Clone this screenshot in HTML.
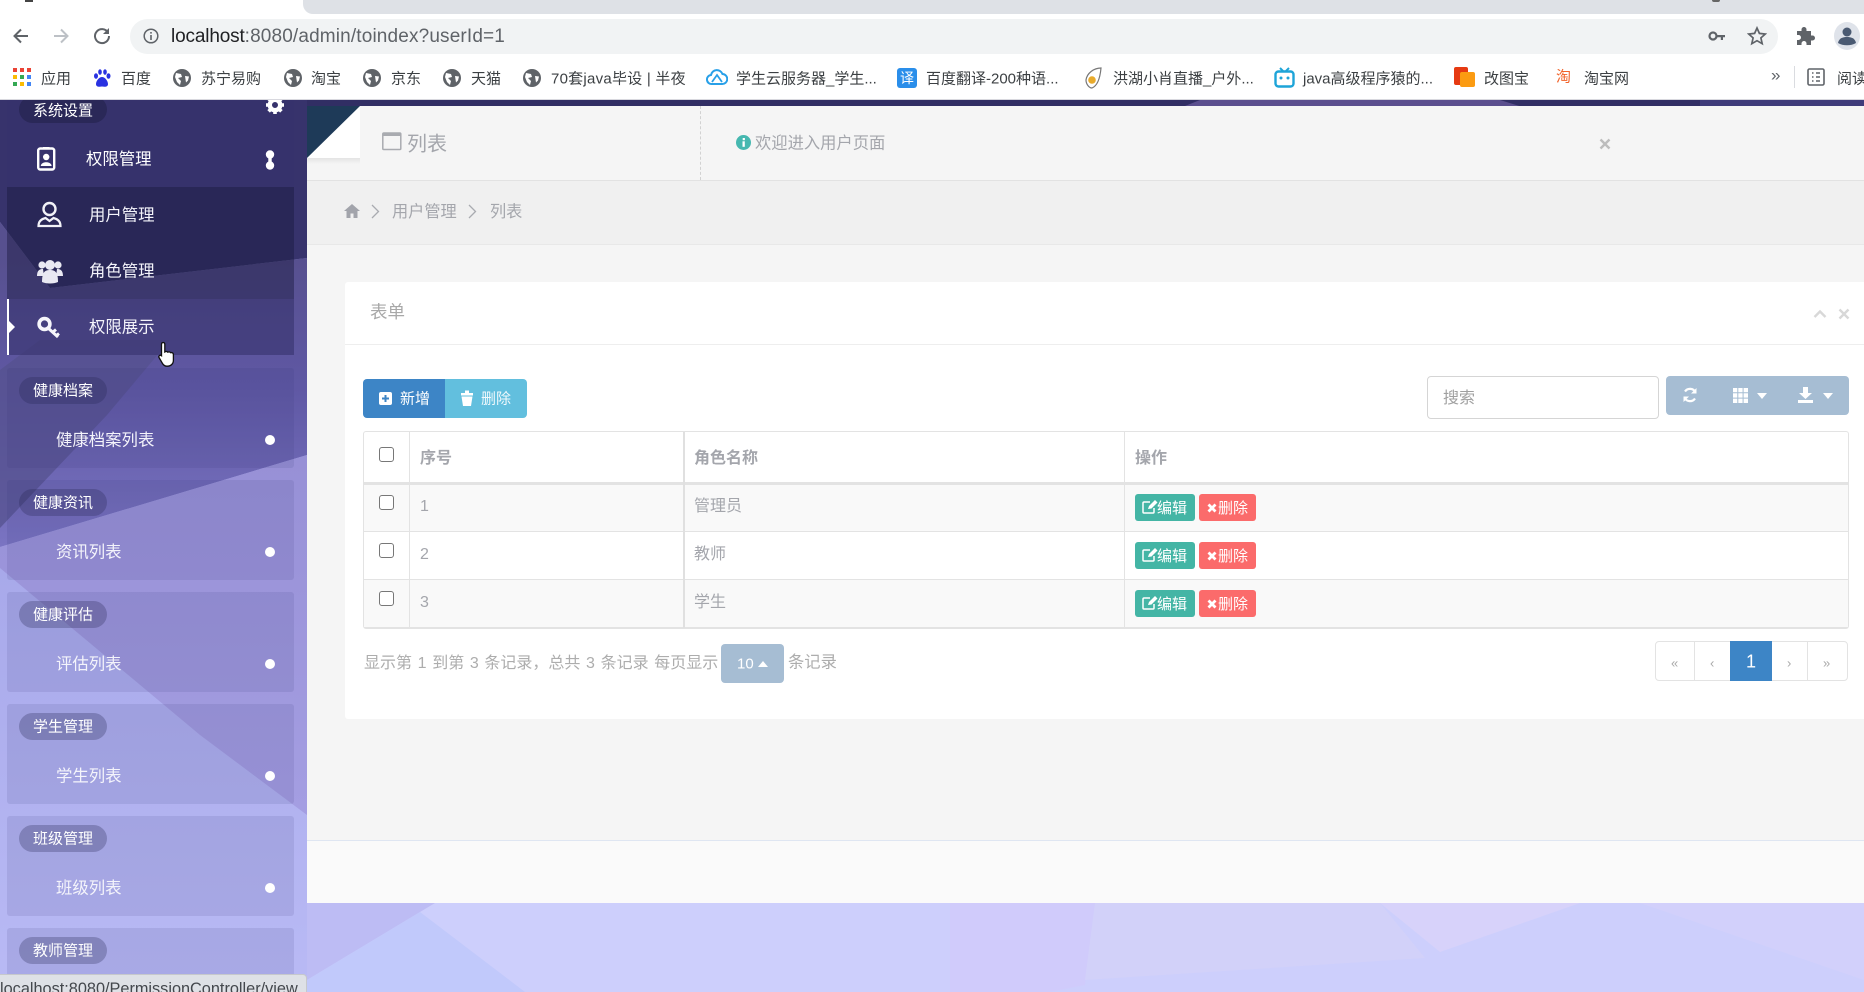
<!DOCTYPE html>
<html lang="zh"><head><meta charset="utf-8"><title>列表</title>
<style>
html,body{margin:0;padding:0;width:1864px;height:992px;overflow:hidden;background:#cdcffc}
body{font-family:"Liberation Sans","Noto Sans CJK SC",sans-serif;position:relative}
.a{position:absolute;box-sizing:border-box}
.t{position:absolute;white-space:nowrap;transform:translateY(calc(-50% + 1.5px));line-height:1.2}
.bm{font-size:15px;color:#3c4043;top:78px}
svg{position:absolute;display:block}
.panel{position:absolute;left:7px;width:287px;height:100px;background:rgba(50,50,110,.11);border-radius:3px}
.pill{position:absolute;left:19px;width:88px;height:27px;border-radius:14px;background:rgba(35,35,80,.28)}
.pt{color:#fff;font-size:15px;left:33px}
.it{color:#f4f4fb;font-size:16.4px}
.dot{position:absolute;left:265px;width:10px;height:10px;border-radius:50%;background:#fff}
.g{color:#a4a6ac}
.ck{position:absolute;left:379px;width:15px;height:15px;box-sizing:border-box;border:1.5px solid #777;border-radius:3px;background:#fff}
.btn{position:absolute;box-sizing:border-box;height:27px;border-radius:3px;color:#fff;font-size:15px;line-height:29px;white-space:nowrap}
.e{left:1135px;width:60px;background:#44b5a5;padding-left:22px}
.d{left:1199px;width:57px;background:#fb6b6b;padding-left:19px}
.pg{font-size:13px;color:#a8a8a8;top:662px}
</style></head><body>

<!-- page background -->
<svg style="left:0;top:100px" width="1864" height="892" viewBox="0 100 1864 892">
<defs>
<linearGradient id="m" x1="0" y1="258" x2="0" y2="547" gradientUnits="userSpaceOnUse"><stop offset="0" stop-color="#57508f"/><stop offset=".45" stop-color="#5f58a4"/><stop offset="1" stop-color="#7a74c2"/></linearGradient>
<linearGradient id="l" x1="0" y1="455" x2="0" y2="815" gradientUnits="userSpaceOnUse"><stop offset="0" stop-color="#9790d6"/><stop offset="1" stop-color="#a49ee2"/></linearGradient>
<linearGradient id="b" x1="0" y1="568" x2="0" y2="992" gradientUnits="userSpaceOnUse"><stop offset="0" stop-color="#a8a9ea"/><stop offset="1" stop-color="#b9baf5"/></linearGradient>
</defs>
<rect x="0" y="100" width="1864" height="892" fill="#cdcffc"/>
<rect x="0" y="100" width="1864" height="8" fill="#312e64"/>
<polygon points="1180,108 1200,100 1500,100 1526,108" fill="#5b4f8e"/>
<rect x="1700" y="100" width="164" height="8" fill="#3f3c7a"/>
<!-- lower lavender facets -->
<polygon points="307,903 435,903 420,912 307,980" fill="#bdbcf4"/>
<polygon points="307,980 420,912 525,992 307,992" fill="#c1c9fb"/>
<polygon points="950,903 1095,903 1085,985 1050,992 950,992" fill="#d0cbfb"/>
<polygon points="1095,903 1380,903 1425,958 1085,980" fill="#d2d1f9"/>
<polygon points="1380,903 1580,903 1440,952" fill="#d7d2fa"/>
<polygon points="1640,903 1864,903 1864,980" fill="#d2d0fb"/>
<!-- sidebar facets -->
<rect x="0" y="100" width="307" height="892" fill="url(#b)"/>
<polygon points="0,222 50,288 307,258 307,455 0,547" fill="url(#m)"/>
<polygon points="0,100 307,100 307,258 50,288 0,222" fill="#37336c"/>
<polygon points="0,528 107,415 170,340 40,340 0,370" fill="#56518f" opacity=".75"/>
<polygon points="0,547 307,455 307,815 200,735 0,568" fill="url(#l)"/>
</svg>

<!-- sidebar panels -->
<div class="a" style="left:7px;top:100px;width:287px;height:255px;background:rgba(50,50,110,.1)"></div>
<div class="a" style="left:7px;top:187px;width:287px;height:168px;background:rgba(20,20,50,.36)"></div>
<div class="a" style="left:7px;top:299px;width:287px;height:56px;background:rgba(90,85,170,.24)"></div>
<div class="a" style="left:7px;top:299px;width:2px;height:56px;background:#fff"></div>
<div class="a" style="left:9px;top:321px;width:6px;height:12px;background:#fff;clip-path:polygon(0 0,100% 50%,0 100%)"></div>
<div class="pill" style="top:96px;background:rgba(25,25,60,.4)"></div>
<div class="t pt" style="top:110px">系统设置</div>
<svg style="left:265px;top:95px" width="20" height="20" viewBox="0 0 20 20"><circle cx="10" cy="10" r="5.2" fill="none" stroke="#fff" stroke-width="4.4"/><g stroke="#fff" stroke-width="3.6"><path d="M10 1v4M10 15v4M1 10h4M15 10h4M3.6 3.6l2.8 2.8M13.6 13.6l2.8 2.8M3.6 16.4l2.8-2.8M13.6 6.4l2.8-2.8"/></g></svg>
<svg style="left:37px;top:147px" width="19" height="24" viewBox="0 0 19 24"><rect x="1.2" y="1.5" width="16" height="21" rx="2" fill="none" stroke="#fff" stroke-width="2.4"/><circle cx="9.2" cy="10" r="3.2" fill="#fff"/><path d="M3.800 19c0-5 10.800-5 10.800 0z" fill="#fff"/><rect x="6" y="0" width="6.500" height="2.500" fill="#fff"/></svg>
<div class="t it" style="left:86px;top:159px;color:#fff">权限管理</div>
<svg style="left:264px;top:150px" width="12" height="20" viewBox="0 0 12 20"><circle cx="6" cy="4.5" r="4.2" fill="#fff"/><circle cx="6" cy="15.5" r="4.2" fill="#fff"/><rect x="4.3" y="4" width="3.4" height="12" fill="#fff"/></svg>
<svg style="left:37px;top:201px" width="25" height="27" viewBox="0 0 25 27"><circle cx="12.5" cy="8" r="6" fill="none" stroke="#f2f2f8" stroke-width="2.4"/><path d="M1.5 25c0-5 3-7 7-8l4 3 4-3c4 1 7 3 7 8z" fill="none" stroke="#f2f2f8" stroke-width="2.2"/></svg>
<div class="t it" style="left:89px;top:215px">用户管理</div>
<svg style="left:37px;top:258px" width="26" height="26" viewBox="0 0 26 26" fill="#e9e9f2"><circle cx="5" cy="7" r="3.6"/><circle cx="21" cy="7" r="3.6"/><circle cx="13" cy="7" r="5"/><path d="M0 18c0-6 3-7 6-7l1 7zM26 18c0-6-3-7-6-7l-1 7z"/><path d="M5 24c0-10 3-12 8-12s8 2 8 12c-4 2-12 2-16 0z"/></svg>
<div class="t it" style="left:89px;top:271px">角色管理</div>
<svg style="left:37px;top:316px" width="24" height="24" viewBox="0 0 24 24"><circle cx="7.5" cy="8" r="5.4" fill="none" stroke="#f6f6fb" stroke-width="3.6"/><path d="M11 12l10 9M16 16l3-2.5M19.5 19.5l2.5-2" fill="none" stroke="#f6f6fb" stroke-width="3"/></svg>
<div class="t it" style="left:89px;top:327px">权限展示</div>

<div class="panel" style="top:368px"></div><div class="pill" style="top:377px"></div>
<div class="t pt" style="top:390px">健康档案</div><div class="t it" style="left:56px;top:440px">健康档案列表</div><div class="dot" style="top:435px"></div>
<div class="panel" style="top:480px"></div><div class="pill" style="top:489px"></div>
<div class="t pt" style="top:502px">健康资讯</div><div class="t it" style="left:56px;top:552px">资讯列表</div><div class="dot" style="top:547px"></div>
<div class="panel" style="top:592px"></div><div class="pill" style="top:601px"></div>
<div class="t pt" style="top:614px">健康评估</div><div class="t it" style="left:56px;top:664px">评估列表</div><div class="dot" style="top:659px"></div>
<div class="panel" style="top:704px"></div><div class="pill" style="top:713px"></div>
<div class="t pt" style="top:726px">学生管理</div><div class="t it" style="left:56px;top:776px">学生列表</div><div class="dot" style="top:771px"></div>
<div class="panel" style="top:816px"></div><div class="pill" style="top:825px"></div>
<div class="t pt" style="top:838px">班级管理</div><div class="t it" style="left:56px;top:888px">班级列表</div><div class="dot" style="top:883px"></div>
<div class="panel" style="top:928px"></div><div class="pill" style="top:937px"></div>
<div class="t pt" style="top:950px">教师管理</div>

<!-- cursor -->
<svg style="left:157px;top:341px" width="20" height="27" viewBox="0 0 20 27"><path d="M6 1.5c1.2 0 1.8.8 1.8 2V11c1-.6 2.4-.6 3 .2 1-.5 2.2-.3 2.8.5 1-.4 2.8 0 2.8 2v5.5c0 3.500-2.500 6-6 6H10c-2 0-3.500-1-4.500-2.700L2 16.500c-.8-1.500 1-3 2.500-1.800l0 -11.200c0-1.200.4-2 1.500-2z" fill="#fff" stroke="#111" stroke-width="1.300"/></svg>

<!-- main -->
<div class="a" style="left:307px;top:106px;width:1557px;height:734px;background:#f5f5f5"></div>
<div class="a" style="left:307px;top:840px;width:1557px;height:63px;background:#fafafa;border-top:1px solid #dfe6f2"></div>
<div class="a" style="left:307px;top:180px;width:1557px;height:65px;background:#f0f0f0;border-top:1px solid #e2e2e2;border-bottom:1px solid #e8e8e8"></div>
<div class="a" style="left:700px;top:106px;width:0;height:74px;border-left:1px dashed #d2d2d2"></div>
<div class="a" style="left:307px;top:158px;width:53px;height:6px;background:linear-gradient(#e4e4e4,#f5f5f5)"></div>
<div class="a" style="left:307px;top:106px;width:53px;height:52px;background:#fff;clip-path:polygon(100% 0,100% 100%,0 100%)"></div>
<svg style="left:307px;top:106px" width="53" height="52"><polygon points="0,0 53,0 0,52" fill="#1e3a58"/></svg>
<svg style="left:382px;top:132px" width="20" height="19" viewBox="0 0 20 19"><rect x=".8" y="1" width="18" height="16.500" rx="1" fill="none" stroke="#a9abb0" stroke-width="1.500"/><rect x="1" y="1.500" width="18" height="2.500" fill="#a9abb0"/></svg>
<div class="t g" style="left:407px;top:143px;font-size:20px">列表</div>
<svg style="left:736px;top:135px" width="15" height="15" viewBox="0 0 15 15"><circle cx="7.500" cy="7.500" r="7.500" fill="#46b8b0"/><rect x="6.500" y="6.300" width="2.300" height="5.500" fill="#fff"/><rect x="6.700" y="3" width="2.200" height="2.200" fill="#fff"/></svg>
<div class="t g" style="left:755px;top:143px;font-size:16.3px">欢迎进入用户页面</div>
<svg style="left:1599px;top:138px" width="12" height="12" viewBox="0 0 12 12"><path d="M1.500 1.500l9 9M10.500 1.500l-9 9" stroke="#bdbdbd" stroke-width="2.400"/></svg>
<svg style="left:344px;top:204px" width="16" height="14" viewBox="0 0 16 14"><path d="M8 0L0 7h2.500v7h4V9.500h3V14h4V7H16z" fill="#a2a4ab"/></svg>
<svg style="left:371px;top:204px" width="9" height="15" viewBox="0 0 9 15"><path d="M1 1l6.500 6.500L1 14" fill="none" stroke="#a9abb0" stroke-width="1.300"/></svg>
<div class="t g" style="left:392px;top:211px;font-size:16.2px">用户管理</div>
<svg style="left:468px;top:204px" width="9" height="15" viewBox="0 0 9 15"><path d="M1 1l6.500 6.500L1 14" fill="none" stroke="#a9abb0" stroke-width="1.300"/></svg>
<div class="t g" style="left:490px;top:211px;font-size:16.2px">列表</div>

<!-- card -->
<div class="a" style="left:345px;top:282px;width:1519px;height:437px;background:#fff;border-radius:3px 0 0 3px"></div>
<div class="a" style="left:345px;top:344px;width:1519px;height:1px;background:#eee"></div>
<div class="t" style="left:370px;top:311px;font-size:17.500px;color:#a8a8a8">表单</div>
<svg style="left:1813px;top:309px" width="14" height="10" viewBox="0 0 14 10"><path d="M1.500 8L7 2.500 12.500 8" fill="none" stroke="#d8d8d8" stroke-width="2.400"/></svg>
<svg style="left:1838px;top:308px" width="12" height="12" viewBox="0 0 12 12"><path d="M1.500 1.500l9 9M10.500 1.500l-9 9" stroke="#d8d8d8" stroke-width="2.400"/></svg>

<!-- toolbar buttons -->
<div class="a" style="left:363px;top:379px;width:82px;height:39px;background:#3d85c6;border-radius:4px 0 0 4px"></div>
<div class="a" style="left:445px;top:379px;width:82px;height:39px;background:#62bfde;border-radius:0 4px 4px 0"></div>
<svg style="left:379px;top:392px" width="13" height="13" viewBox="0 0 13 13"><rect width="13" height="13" rx="2" fill="#fff"/><path d="M6.500 3v7M3 6.500h7" stroke="#3d85c6" stroke-width="2"/></svg>
<div class="t" style="left:400px;top:398px;font-size:15px;color:#fff">新增</div>
<svg style="left:460px;top:390px" width="14" height="16" viewBox="0 0 14 16"><path d="M1 3h12v2.500H1zM5 .5h4V3H5zM1.500 6.500h11L11 16H3z" fill="#fff"/></svg>
<div class="t" style="left:481px;top:398px;font-size:15px;color:#f1f9fc">删除</div>

<div class="a" style="left:1427px;top:376px;width:232px;height:43px;border:1px solid #d5d5d5;border-radius:4px;background:#fff"></div>
<div class="t" style="left:1443px;top:397px;font-size:16px;color:#a0a0a0">搜索</div>
<div class="a" style="left:1666px;top:376px;width:183px;height:39px;background:#a6bdd3;border-radius:4px"></div>
<svg style="left:1682px;top:387px" width="16" height="16" viewBox="0 0 16 16"><path d="M13.500 5.500A6 6 0 0 0 3 4.500M2.500 10.500A6 6 0 0 0 13 11.500" fill="none" stroke="#fff" stroke-width="2.200"/><path d="M14.500 1v5.500H9zM1.500 15V9.500H7z" fill="#fff"/></svg>
<svg style="left:1733px;top:388px" width="15" height="15" viewBox="0 0 15 15" fill="#fff"><path d="M0 0h4.300v4.300H0zM5.300 0h4.300v4.300H5.300zM10.600 0H15v4.300h-4.400zM0 5.300h4.300v4.300H0zM5.300 5.300h4.300v4.300H5.300zM10.600 5.300H15v4.300h-4.400zM0 10.600h4.300V15H0zM5.300 10.600h4.300V15H5.300zM10.600 10.600H15V15h-4.400z"/></svg>
<svg style="left:1757px;top:393px" width="10" height="6" viewBox="0 0 10 6"><path d="M0 0h10L5 6z" fill="#fff"/></svg>
<svg style="left:1798px;top:387px" width="15" height="16" viewBox="0 0 15 16" fill="#fff"><path d="M5 0h5v6h4L7.500 12 1 6h4zM0 13h15v3H0z"/></svg>
<svg style="left:1823px;top:393px" width="10" height="6" viewBox="0 0 10 6"><path d="M0 0h10L5 6z" fill="#fff"/></svg>

<!-- table -->
<div class="a" style="left:363px;top:431px;width:1486px;height:198px;border:1px solid #e3e3e3;border-radius:3px;background:#fff"></div>
<div class="a" style="left:364px;top:485px;width:1484px;height:47px;background:#f9f9f9"></div>
<div class="a" style="left:364px;top:580px;width:1484px;height:47px;background:#f9f9f9"></div>
<div class="a" style="left:364px;top:482px;width:1484px;height:3px;background:#e3e3e3"></div>
<div class="a" style="left:364px;top:531px;width:1484px;height:1px;background:#e3e3e3"></div>
<div class="a" style="left:364px;top:579px;width:1484px;height:1px;background:#e3e3e3"></div>
<div class="a" style="left:364px;top:627px;width:1484px;height:1px;background:#e3e3e3"></div>
<div class="a" style="left:409px;top:432px;width:1px;height:196px;background:#e3e3e3"></div>
<div class="a" style="left:683px;top:432px;width:2px;height:196px;background:#e0e0e0"></div>
<div class="a" style="left:1124px;top:432px;width:1px;height:196px;background:#e3e3e3"></div>
<div class="ck" style="top:447px"></div><div class="ck" style="top:495px"></div><div class="ck" style="top:543px"></div><div class="ck" style="top:591px"></div>
<div class="t" style="left:420px;top:457px;font-size:16px;font-weight:bold;color:#a4a6ac">序号</div>
<div class="t" style="left:694px;top:457px;font-size:16px;font-weight:bold;color:#a4a6ac">角色名称</div>
<div class="t" style="left:1135px;top:457px;font-size:16px;font-weight:bold;color:#a4a6ac">操作</div>
<div class="t g" style="left:420px;top:505px;font-size:16px">1</div>
<div class="t g" style="left:694px;top:505px;font-size:16px">管理员</div>
<div class="t g" style="left:420px;top:553px;font-size:16px">2</div>
<div class="t g" style="left:694px;top:553px;font-size:16px">教师</div>
<div class="t g" style="left:420px;top:601px;font-size:16px">3</div>
<div class="t g" style="left:694px;top:601px;font-size:16px">学生</div>

<div class="btn e" style="top:494px">编辑</div><div class="btn d" style="top:494px">删除</div>
<div class="btn e" style="top:542px">编辑</div><div class="btn d" style="top:542px">删除</div>
<div class="btn e" style="top:590px">编辑</div><div class="btn d" style="top:590px">删除</div>
<svg style="left:1142px;top:500px" width="16" height="14" viewBox="0 0 16 14"><path d="M12 8v4a1 1 0 0 1-1 1H2a1 1 0 0 1-1-1V3a1 1 0 0 1 1-1h6" fill="none" stroke="#fff" stroke-width="1.500"/><path d="M6 9l1-3 6-6 2.500 2.500-6 6z" fill="#fff"/></svg>
<svg style="left:1142px;top:548px" width="16" height="14" viewBox="0 0 16 14"><path d="M12 8v4a1 1 0 0 1-1 1H2a1 1 0 0 1-1-1V3a1 1 0 0 1 1-1h6" fill="none" stroke="#fff" stroke-width="1.500"/><path d="M6 9l1-3 6-6 2.500 2.500-6 6z" fill="#fff"/></svg>
<svg style="left:1142px;top:596px" width="16" height="14" viewBox="0 0 16 14"><path d="M12 8v4a1 1 0 0 1-1 1H2a1 1 0 0 1-1-1V3a1 1 0 0 1 1-1h6" fill="none" stroke="#fff" stroke-width="1.500"/><path d="M6 9l1-3 6-6 2.500 2.500-6 6z" fill="#fff"/></svg>
<svg style="left:1207px;top:503px" width="10" height="10" viewBox="0 0 10 10"><path d="M1.500 1.500l7 7M8.500 1.500l-7 7" stroke="#fff" stroke-width="2.800"/></svg>
<svg style="left:1207px;top:551px" width="10" height="10" viewBox="0 0 10 10"><path d="M1.500 1.500l7 7M8.500 1.500l-7 7" stroke="#fff" stroke-width="2.800"/></svg>
<svg style="left:1207px;top:599px" width="10" height="10" viewBox="0 0 10 10"><path d="M1.500 1.500l7 7M8.500 1.500l-7 7" stroke="#fff" stroke-width="2.800"/></svg>

<!-- pagination -->
<div class="t" style="left:364px;top:662px;font-size:16px;word-spacing:1.2px;color:#adadad">显示第 1 到第 3 条记录，总共 3 条记录 每页显示</div>
<div class="a" style="left:721px;top:644px;width:63px;height:39px;background:#a6bdd3;border-radius:4px"></div>
<div class="t" style="left:737px;top:663px;font-size:15px;color:#fff">10</div>
<svg style="left:758px;top:661px" width="10" height="6" viewBox="0 0 10 6"><path d="M0 6h10L5 0z" fill="#fff"/></svg>
<div class="t" style="left:788px;top:662px;font-size:16.3px;color:#adadad">条记录</div>
<div class="a" style="left:1655px;top:641px;width:193px;height:40px;border:1px solid #e3e3e3;border-radius:4px;background:#fff"></div>
<div class="a" style="left:1694px;top:641px;width:1px;height:40px;background:#e3e3e3"></div>
<div class="a" style="left:1807px;top:641px;width:1px;height:40px;background:#e3e3e3"></div>
<div class="a" style="left:1768px;top:641px;width:1px;height:40px;background:#e3e3e3"></div>
<div class="a" style="left:1730px;top:641px;width:42px;height:40px;background:#3d85c6"></div>
<div class="t pg" style="left:1671px">«</div><div class="t pg" style="left:1710px">‹</div>
<div class="t" style="left:1746px;top:661px;font-size:18px;color:#fff">1</div>
<div class="t pg" style="left:1787px">›</div><div class="t pg" style="left:1823px">»</div>

<!-- browser chrome -->
<div class="a" style="left:0;top:0;width:1864px;height:100px;background:#fff;border-bottom:1px solid #d8d8de"></div>
<div class="a" style="left:303px;top:0;width:1561px;height:14px;background:#dee1e6;border-radius:0 0 0 10px"></div>
<div class="a" style="left:25px;top:0;width:8px;height:2px;background:#444"></div>
<div class="a" style="left:1712px;top:0;width:8px;height:2px;background:#666;border-radius:0 0 4px 4px"></div>
<div class="a" style="left:130px;top:19px;width:1648px;height:35px;background:#f1f3f4;border-radius:18px"></div>
<svg style="left:11px;top:26px" width="20" height="20" viewBox="0 0 20 20"><path d="M17 10H4M10 3.500L3.500 10l6.500 6.500" fill="none" stroke="#5f6368" stroke-width="2"/></svg>
<svg style="left:51px;top:26px" width="20" height="20" viewBox="0 0 20 20"><path d="M3 10h13M10 3.500l6.500 6.500-6.500 6.500" fill="none" stroke="#bdc1c6" stroke-width="2"/></svg>
<svg style="left:92px;top:26px" width="20" height="20" viewBox="0 0 20 20"><path d="M16 6.500A7 7 0 1 0 17 10" fill="none" stroke="#5f6368" stroke-width="2"/><path d="M17 2v6h-6z" fill="#5f6368"/></svg>
<svg style="left:143px;top:28px" width="16" height="16" viewBox="0 0 16 16"><circle cx="8" cy="8" r="6.800" fill="none" stroke="#5f6368" stroke-width="1.500"/><path d="M7.200 7h1.600v5H7.200zM7.200 4h1.600v1.600H7.200z" fill="#5f6368"/></svg>
<div class="t" style="left:171px;top:36px;font-size:19px;color:#5f6368;letter-spacing:.15px"><span style="color:#202124;letter-spacing:-.15px">localhost</span>:8080/admin/toindex?userId=1</div>
<svg style="left:1708px;top:29px" width="18" height="14" viewBox="0 0 18 14"><circle cx="5" cy="7" r="3.500" fill="none" stroke="#5f6368" stroke-width="2.200"/><path d="M8 6h9v2.200h-2V11h-2.200V8.200H8z" fill="#5f6368"/></svg>
<svg style="left:1747px;top:26px" width="20" height="20" viewBox="0 0 20 20"><path d="M10 2l2.400 5.400 5.900.6-4.400 3.900 1.300 5.800L10 14.700l-5.200 3 1.300-5.800L1.700 8l5.900-.6z" fill="none" stroke="#5f6368" stroke-width="1.700"/></svg>
<svg style="left:1797px;top:27px" width="18" height="18" viewBox="0 0 18 18"><path d="M7 0a2.500 2.500 0 0 1 2.500 2.500V4H14v4.500h1.500a2.500 2.500 0 0 1 0 5H14V18H9.500v-1.500a2.500 2.500 0 0 0-5 0V18H0v-5h1.500a2.500 2.500 0 0 0 0-5H0V4h4.500V2.500A2.500 2.500 0 0 1 7 0z" fill="#5f6368"/></svg>
<svg style="left:1833px;top:22px" width="31" height="28" viewBox="0 0 31 28"><ellipse cx="14" cy="14" rx="13" ry="14" fill="#dfe3ea"/><circle cx="14" cy="10" r="4.500" fill="#4a5a72"/><path d="M5 21c1-5 5-6 9-6s8 1 9 6c-5 3-13 3-18 0z" fill="#4a5a72"/></svg>

<!-- bookmarks -->
<svg style="left:13px;top:68px" width="18" height="18" viewBox="0 0 18 18"><g><rect x="0" y="0" width="4" height="4" fill="#ea4335"/><rect x="7" y="0" width="4" height="4" fill="#ea4335"/><rect x="14" y="0" width="4" height="4" fill="#ea4335"/><rect x="0" y="7" width="4" height="4" fill="#fbbc04"/><rect x="7" y="7" width="4" height="4" fill="#34a853"/><rect x="14" y="7" width="4" height="4" fill="#4285f4"/><rect x="0" y="14" width="4" height="4" fill="#34a853"/><rect x="7" y="14" width="4" height="4" fill="#fbbc04"/><rect x="14" y="14" width="4" height="4" fill="#4285f4"/></g></svg>
<div class="t bm" style="left:41px">应用</div>
<svg style="left:93px;top:69px" width="18" height="18" viewBox="0 0 18 18" fill="#2932e1"><ellipse cx="3" cy="7" rx="2" ry="2.800"/><ellipse cx="7" cy="3" rx="1.800" ry="2.800"/><ellipse cx="12" cy="3" rx="1.800" ry="2.800"/><ellipse cx="15.500" cy="7" rx="2" ry="2.800"/><path d="M9 8c-3 0-6 4-6 7 0 3 3 3 6 2.500 3 .5 6 .5 6-2.500 0-3-3-7-6-7z"/></svg>
<div class="t bm" style="left:121px">百度</div>
<svg style="left:173px;top:69px;" width="18" height="18" viewBox="0 0 18 18"><circle cx="9" cy="9" r="9" fill="#5f6368"/><path d="M3 4l5 1 1 3-4 1 3 3-1 4-3-3-2-5zM12 7l4 .5-1 4-2 2z" fill="#fff"/></svg>
<div class="t bm" style="left:201px">苏宁易购</div>
<svg style="left:284px;top:69px;" width="18" height="18" viewBox="0 0 18 18"><circle cx="9" cy="9" r="9" fill="#5f6368"/><path d="M3 4l5 1 1 3-4 1 3 3-1 4-3-3-2-5zM12 7l4 .5-1 4-2 2z" fill="#fff"/></svg>
<div class="t bm" style="left:311px">淘宝</div>
<svg style="left:363px;top:69px;" width="18" height="18" viewBox="0 0 18 18"><circle cx="9" cy="9" r="9" fill="#5f6368"/><path d="M3 4l5 1 1 3-4 1 3 3-1 4-3-3-2-5zM12 7l4 .5-1 4-2 2z" fill="#fff"/></svg>
<div class="t bm" style="left:391px">京东</div>
<svg style="left:443px;top:69px;" width="18" height="18" viewBox="0 0 18 18"><circle cx="9" cy="9" r="9" fill="#5f6368"/><path d="M3 4l5 1 1 3-4 1 3 3-1 4-3-3-2-5zM12 7l4 .5-1 4-2 2z" fill="#fff"/></svg>
<div class="t bm" style="left:471px">天猫</div>
<svg style="left:523px;top:69px;" width="18" height="18" viewBox="0 0 18 18"><circle cx="9" cy="9" r="9" fill="#5f6368"/><path d="M3 4l5 1 1 3-4 1 3 3-1 4-3-3-2-5zM12 7l4 .5-1 4-2 2z" fill="#fff"/></svg>
<div class="t bm" style="left:551px;letter-spacing:.25px">70套java毕设 | 半夜</div>
<svg style="left:706px;top:68px" width="22" height="18" viewBox="0 0 22 18"><path d="M6 16a4.500 4.500 0 0 1-1-9 6 6 0 0 1 11.500-1A5 5 0 0 1 16 16z" fill="none" stroke="#28a0e8" stroke-width="2"/><path d="M6 14l5-7 5 7" fill="none" stroke="#28a0e8" stroke-width="1.800"/></svg>
<div class="t bm" style="left:736px">学生云服务器_学生...</div>
<div class="a" style="left:897px;top:68px;width:20px;height:20px;background:#2a8eea;border-radius:3px;color:#fff;font-size:14px;line-height:20px;text-align:center">译</div>
<div class="t bm" style="left:926px">百度翻译-200种语...</div>
<svg style="left:1084px;top:67px" width="19" height="22" viewBox="0 0 19 22"><path d="M17 1C10 1 3 6 2 13c0 4 3 8 6 8 5-2 8-9 9-20z" fill="#fff" stroke="#777" stroke-width="1.200"/><circle cx="8" cy="13" r="3.800" fill="#e9ab2c"/></svg>
<div class="t bm" style="left:1113px">洪湖小肖直播_户外...</div>
<svg style="left:1274px;top:67px" width="21" height="21" viewBox="0 0 21 21"><rect x="1.500" y="4.500" width="18" height="15" rx="3" fill="none" stroke="#1da4d8" stroke-width="2.400"/><path d="M6 1l3 3M15 1l-3 3" stroke="#1da4d8" stroke-width="2"/><circle cx="7" cy="11" r="1.500" fill="#1da4d8"/><circle cx="14" cy="11" r="1.500" fill="#1da4d8"/></svg>
<div class="t bm" style="left:1303px">java高级程序猿的...</div>
<div class="a" style="left:1454px;top:67px;width:14px;height:18px;background:#e63a12;border-radius:2px"></div>
<div class="a" style="left:1460px;top:72px;width:15px;height:15px;background:#fb9b12;border-radius:2px"></div>
<div class="t bm" style="left:1484px">改图宝</div>
<div class="t" style="left:1556px;top:76px;font-size:15px;color:#f1632a">淘</div>
<div class="t bm" style="left:1584px">淘宝网</div>
<div class="t" style="left:1771px;top:74px;font-size:17px;color:#5f6368">»</div>
<div class="a" style="left:1794px;top:66px;width:1px;height:22px;background:#dadce0"></div>
<svg style="left:1807px;top:68px" width="18" height="18" viewBox="0 0 18 18"><rect x="1" y="1" width="16" height="16" rx="1.500" fill="none" stroke="#5f6368" stroke-width="1.600"/><path d="M5 5h1.500M9 5h4M5 9h1.500M9 9h4M5 13h1.500M9 13h4" stroke="#5f6368" stroke-width="1.500"/></svg>
<div class="t bm" style="left:1837px">阅读</div>

<!-- status bubble -->
<div class="a" style="left:-2px;top:974px;width:309px;height:20px;background:#dee1e6;border:1px solid #c6c8cc;border-radius:0 4px 0 0;overflow:hidden"><span style="position:absolute;left:1px;top:5px;font-size:16.3px;line-height:18px;color:#44484d;white-space:nowrap">localhost:8080/PermissionController/view</span></div>
</body></html>
